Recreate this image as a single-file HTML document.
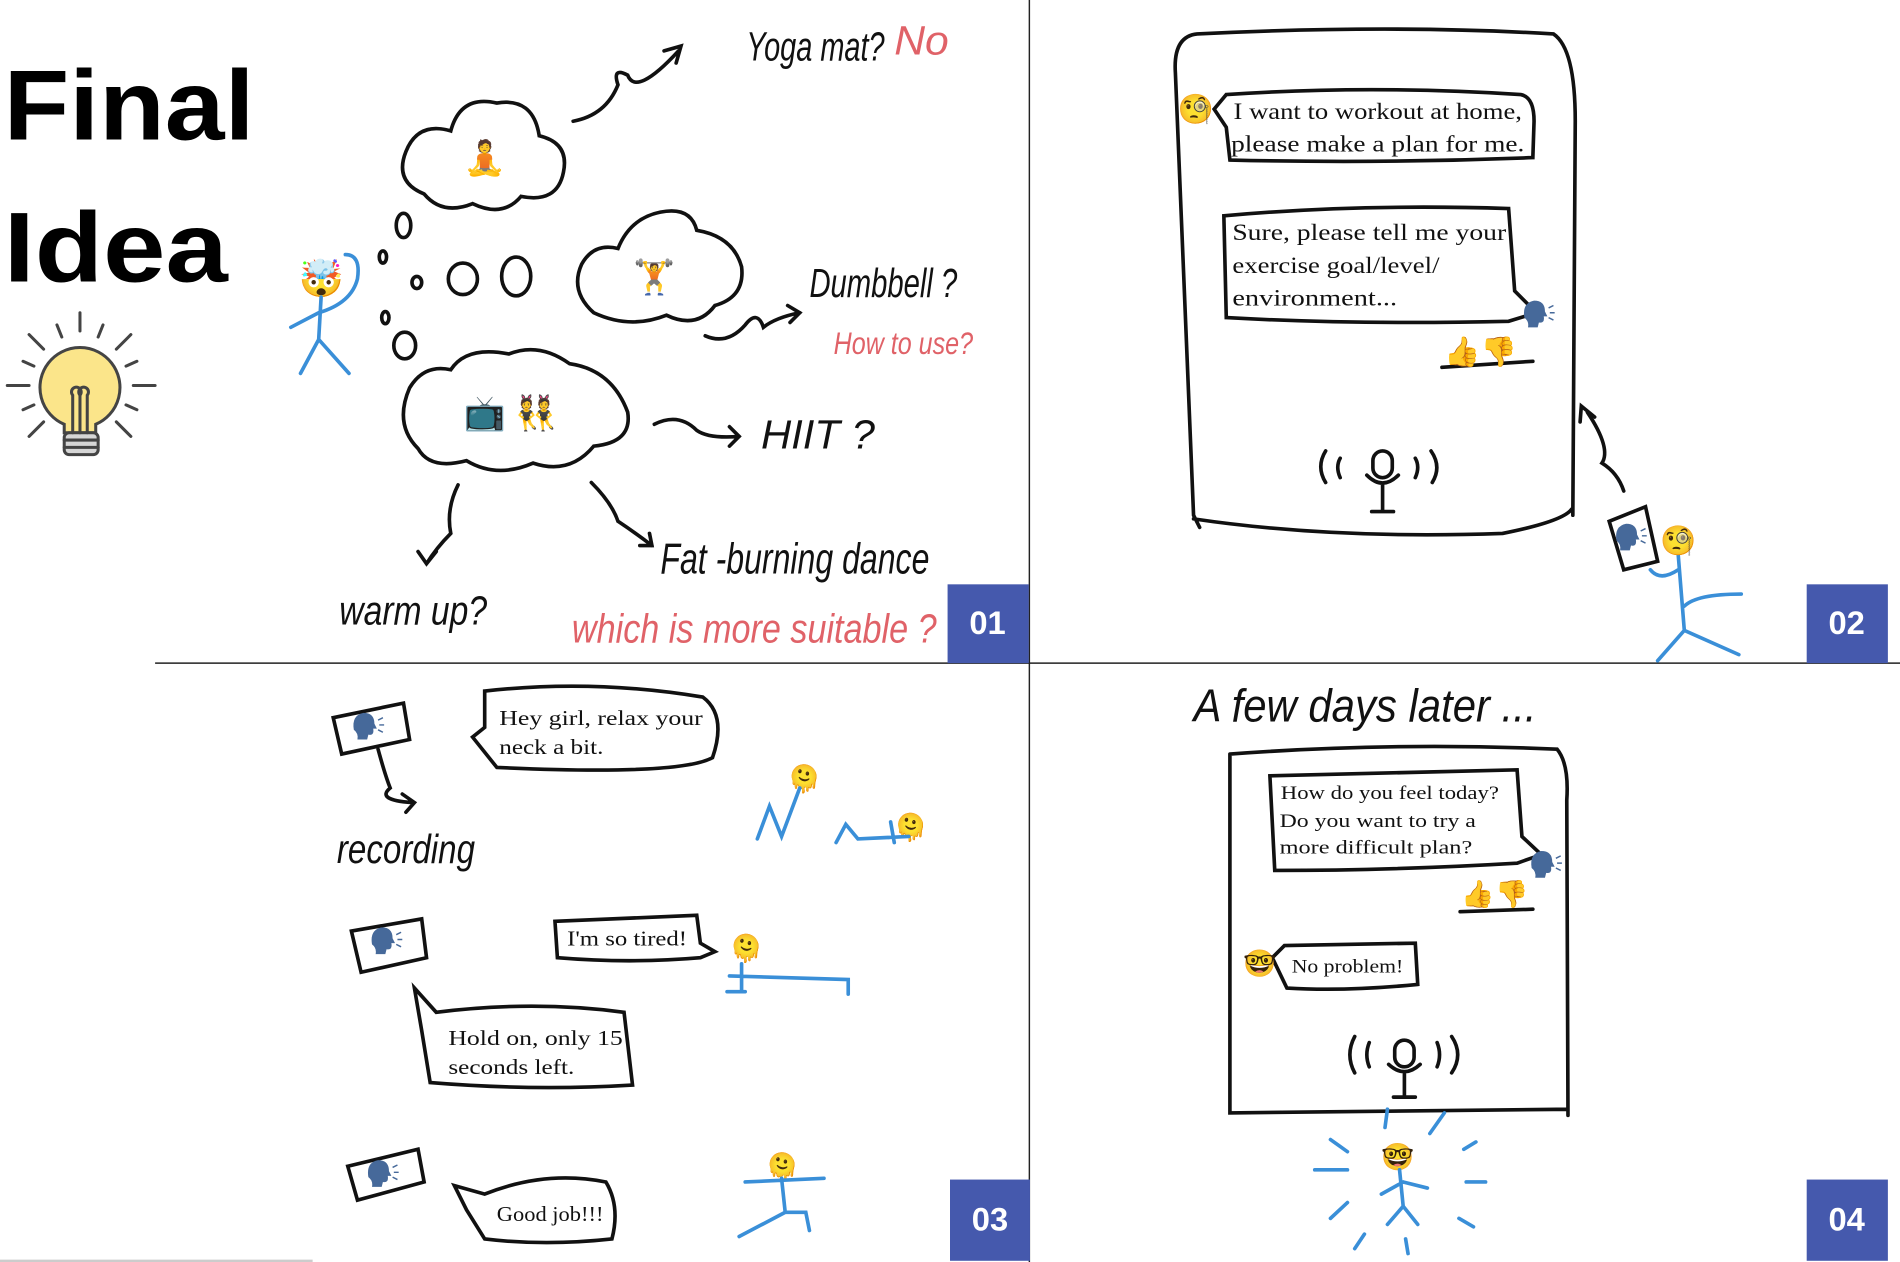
<!DOCTYPE html>
<html><head><meta charset="utf-8"><style>
html,body{margin:0;padding:0;background:#fff;width:1900px;height:1262px;overflow:hidden}
svg{display:block}
.h{font-family:"Liberation Sans",sans-serif;font-style:italic;fill:#111}
.r{fill:#e06268}
.c{font-family:"Liberation Serif",serif;fill:#111}
</style></head><body>
<svg width="1900" height="1262" viewBox="0 0 1568 1041" preserveAspectRatio="none" xmlns="http://www.w3.org/2000/svg">
<defs><g id="spk"><path d="M0 14 Q-2 2 8 0 Q17 0 17 9 L19 13 L16 13 Q17 19 12 18 L11 22 L3 22 Q4 17 0 14Z" fill="#46699a"/><path d="M20 6 L24 4 M21 10 L25 10 M20 14 L24 16" stroke="#46699a" stroke-width="1.2"/></g></defs>
<g font-family="Liberation Sans, sans-serif">
<text x="3" y="115" font-size="82" font-weight="bold" fill="#000" textLength="207" lengthAdjust="spacingAndGlyphs">Final</text>
<text x="3" y="232" font-size="82" font-weight="bold" fill="#000" textLength="185" lengthAdjust="spacingAndGlyphs">Idea</text>
</g>
<!-- bulb -->
<g stroke="#444" stroke-width="2.5" fill="none" stroke-linecap="round">
<line x1="66" y1="258" x2="66" y2="273"/><line x1="6" y1="318" x2="24" y2="318"/><line x1="110" y1="318" x2="128" y2="318"/>
<line x1="24" y1="276" x2="36" y2="288"/><line x1="108" y1="276" x2="96" y2="288"/>
<line x1="24" y1="360" x2="36" y2="348"/><line x1="108" y1="360" x2="96" y2="348"/>
<line x1="47" y1="268" x2="51" y2="278"/><line x1="85" y1="268" x2="81" y2="278"/>
<line x1="19" y1="298" x2="28" y2="302"/><line x1="113" y1="298" x2="104" y2="302"/>
<line x1="19" y1="338" x2="28" y2="334"/><line x1="113" y1="338" x2="104" y2="334"/>
<path d="M53 350 A33 33 0 1 1 79 350 L79 357 L53 357 Z" fill="#fbe58a"/>
<rect x="53" y="357" width="28" height="18" rx="4" fill="#d6d6d6"/>
<line x1="53" y1="363" x2="81" y2="363"/><line x1="53" y1="369" x2="81" y2="369"/>
<path d="M60 357 V326 A4 4 0 1 1 66 326 M66 326 A4 4 0 1 1 72 326 V357 M66 326 V357"/>
</g>
<line x1="128" y1="547" x2="1568" y2="547" stroke="#222" stroke-width="1.2"/>
<line x1="849.5" y1="0" x2="849.5" y2="1041" stroke="#222" stroke-width="1.2"/>
<line x1="0" y1="1040" x2="258" y2="1040" stroke="#ccc" stroke-width="2"/>
<g fill="#4559ad"><rect x="782" y="482" width="67" height="65"/><rect x="1491" y="482" width="67" height="65"/><rect x="784" y="973" width="66" height="67"/><rect x="1491" y="973" width="67" height="67"/></g>
<g fill="#fff" font-family="Liberation Sans, sans-serif" font-weight="bold" font-size="27" text-anchor="middle">
<text x="815" y="523">01</text><text x="1524" y="523">02</text><text x="817" y="1015">03</text><text x="1524" y="1015">04</text></g>

<!-- Panel 1 -->
<g stroke="#111" stroke-width="3" fill="none" stroke-linecap="round">
<path d="M350 160 Q325 150 335 125 Q345 100 372 108 Q380 78 410 85 Q440 80 445 112 Q470 118 465 142 Q460 168 430 162 Q415 180 390 168 Q365 178 350 160Z"/>
<path d="M490 258 Q470 240 480 218 Q490 200 510 205 Q520 180 545 175 Q570 170 575 190 Q605 195 612 220 Q615 245 590 252 Q575 272 550 260 Q520 272 490 258Z"/>
<path d="M345 370 Q325 350 338 320 Q350 300 372 305 Q385 285 420 292 Q445 282 470 300 Q505 305 518 340 Q522 365 490 368 Q470 392 440 382 Q410 395 385 380 Q355 388 345 370Z"/>
<ellipse cx="333" cy="186" rx="6" ry="10"/><ellipse cx="316" cy="212" rx="3" ry="5"/><ellipse cx="344" cy="233" rx="4" ry="5"/>
<ellipse cx="382" cy="230" rx="12" ry="13"/><ellipse cx="426" cy="228" rx="12" ry="16"/>
<ellipse cx="318" cy="262" rx="3" ry="5"/><ellipse cx="334" cy="285" rx="9" ry="11"/>
<path d="M473 100 Q500 95 510 70 Q505 55 518 62 Q525 80 560 42 M548 42 L562 38 L558 52"/>
<path d="M582 277 Q600 285 615 268 Q625 255 630 270 Q640 262 660 258 M650 252 L660 258 L652 266"/>
<path d="M540 350 Q560 340 575 355 Q585 362 610 360 M602 352 L610 360 L602 368"/>
<path d="M378 400 Q368 420 372 440 Q360 452 352 465 M345 455 L352 465 L360 455"/>
<path d="M488 398 Q505 415 510 430 Q525 440 538 450 M528 450 L538 450 L536 440"/>
</g>
<g font-size="28" text-anchor="middle"><text x="400" y="140">🧘</text><text x="540" y="238">🏋</text><text x="400" y="350">📺</text><text x="442" y="350">👯</text></g>
<text x="265" y="240" font-size="30" text-anchor="middle">🤯</text>
<g stroke="#3a8fd8" stroke-width="3" fill="none" stroke-linecap="round">
<path d="M265 245 L263 280 L248 308 M263 280 L288 308 M263 258 L240 270 M263 258 Q290 250 295 230 Q298 210 285 210"/>
</g>
<g lengthAdjust="spacingAndGlyphs">
<text x="616" y="50" class="h" font-size="34" textLength="114" lengthAdjust="spacingAndGlyphs">Yoga mat?</text><text x="738" y="45" class="h r" font-size="34" textLength="45" lengthAdjust="spacingAndGlyphs">No</text>
<text x="668" y="245" class="h" font-size="34" textLength="122" lengthAdjust="spacingAndGlyphs">Dumbbell ?</text>
<text x="688" y="292" class="h r" font-size="26" textLength="115" lengthAdjust="spacingAndGlyphs">How to use?</text>
<text x="628" y="370" class="h" font-size="34" textLength="94" lengthAdjust="spacingAndGlyphs">HIIT  ?</text>
<text x="545" y="473" class="h" font-size="36" textLength="222" lengthAdjust="spacingAndGlyphs">Fat -burning  dance</text>
<text x="280" y="515" class="h" font-size="34" textLength="122" lengthAdjust="spacingAndGlyphs">warm up?</text>
<text x="472" y="530" class="h r" font-size="34" textLength="301" lengthAdjust="spacingAndGlyphs">which is more  suitable ?</text>
</g>

<!-- Panel 2 -->
<g stroke="#111" stroke-width="3" fill="none" stroke-linecap="round">
<path d="M988 28 Q1150 20 1282 28 Q1300 40 1300 100 L1298 425 M988 28 Q968 30 970 60 L985 425 L990 435 M985 428 Q1100 445 1240 440 Q1290 430 1297 420"/>
<path d="M1012 78 Q1130 70 1255 78 Q1266 80 1266 100 L1265 130 Q1140 135 1015 132 L1012 105 L1002 90 Z"/>
<path d="M1010 178 Q1120 168 1245 172 L1250 240 L1268 258 L1245 265 Q1120 268 1012 262 Z"/>
<line x1="1190" y1="303" x2="1265" y2="298"/>
<path d="M1094 372 Q1086 385 1094 398 M1106 378 Q1102 385 1106 394 M1181 372 Q1190 385 1182 398 M1168 378 Q1172 385 1168 394"/>
<rect x="1133" y="372" width="16" height="22" rx="8"/><path d="M1128 392 Q1141 405 1154 392 M1141 400 V422 M1132 422 H1150"/>
<path d="M1328 430 L1358 418 L1368 463 L1340 470 Z"/>
<path d="M1340 405 Q1335 390 1322 382 Q1330 370 1310 340 M1304 348 L1305 335 L1316 344"/>
</g>
<g stroke="#3a8fd8" stroke-width="3" fill="none" stroke-linecap="round">
<path d="M1385 458 L1390 520 L1368 545 M1390 520 L1435 540 M1390 500 Q1400 490 1437 490 M1385 470 Q1370 480 1362 470"/>
</g>
<use href="#spk" x="1258" y="248"/><use href="#spk" x="1334" y="432"/>
<g font-size="24"><text x="972" y="98">🧐</text><text x="1192" y="298">👍</text><text x="1222" y="298">👎</text><text x="1370" y="454">🧐</text></g>
<g class="c" font-size="19"><text x="1018" y="98" textLength="238" lengthAdjust="spacingAndGlyphs">I want to workout at home,</text><text x="1016" y="125" textLength="242" lengthAdjust="spacingAndGlyphs">please make a plan for me.</text>
<text x="1017" y="198" textLength="226" lengthAdjust="spacingAndGlyphs">Sure, please tell me your</text><text x="1017" y="225" textLength="171" lengthAdjust="spacingAndGlyphs">exercise goal/level/</text><text x="1017" y="252" textLength="136" lengthAdjust="spacingAndGlyphs">environment...</text></g>

<!-- Panel 3 -->
<g stroke="#111" stroke-width="3" fill="none" stroke-linecap="round">
<path d="M275 592 L333 580 L338 610 L282 622 Z"/><path d="M312 618 Q318 640 322 650 Q310 660 340 662 M332 655 L342 662 L335 670"/>
<path d="M400 570 Q490 560 580 575 Q600 590 588 625 Q560 640 410 633 L390 608 L400 600 Z"/>
<path d="M290 768 L348 758 L352 790 L298 802 Z"/>
<path d="M458 760 L575 755 L578 778 L590 785 L578 790 Q520 795 460 790 Z"/>
<path d="M342 815 L360 835 Q440 825 515 835 L522 895 Q440 900 355 893 L348 850 Z"/>
<path d="M287 962 L345 948 L350 975 L295 990 Z"/>
<path d="M375 978 L400 985 Q450 965 500 975 Q512 995 505 1022 Q450 1028 400 1022 L385 998 Z"/>
</g>
<use href="#spk" x="292" y="588"/><use href="#spk" x="307" y="765"/><use href="#spk" x="304" y="957"/>
<g font-size="22"><text x="650" y="650">🫠</text><text x="738" y="690">🫠</text><text x="602" y="790">🫠</text><text x="632" y="970">🫠</text></g>
<g stroke="#3a8fd8" stroke-width="3" fill="none" stroke-linecap="round">
<path d="M625 692 L635 665 L645 690 L660 650 M690 695 L698 680 L708 692 L750 690 M735 678 L738 695"/>
<path d="M612 795 L612 818 M602 805 L700 808 L700 820 M600 818 L615 818"/>
<path d="M645 972 L648 1000 L610 1020 M648 1000 L665 1000 L668 1015 M615 975 L680 972"/>
</g>
<text x="278" y="712" class="h" font-size="34" textLength="114" lengthAdjust="spacingAndGlyphs">recording</text>
<g class="c" font-size="17"><text x="412" y="598" textLength="168" lengthAdjust="spacingAndGlyphs">Hey girl, relax your</text><text x="412" y="622" textLength="86" lengthAdjust="spacingAndGlyphs">neck a bit.</text>
<text x="468" y="780" textLength="99" lengthAdjust="spacingAndGlyphs">I'm so tired!</text><text x="370" y="862" textLength="144" lengthAdjust="spacingAndGlyphs">Hold on, only 15</text><text x="370" y="886" textLength="104" lengthAdjust="spacingAndGlyphs">seconds left.</text><text x="410" y="1007" textLength="88" lengthAdjust="spacingAndGlyphs">Good job!!!</text></g>

<!-- Panel 4 -->
<text x="985" y="595" class="h" font-size="38" textLength="283" lengthAdjust="spacingAndGlyphs">A few days later ...</text>
<g stroke="#111" stroke-width="3" fill="none" stroke-linecap="round">
<path d="M1015 622 Q1150 612 1285 618 Q1295 630 1293 660 L1294 920 M1015 622 L1015 918 L1294 915"/>
<path d="M1048 640 L1252 635 L1256 690 L1272 705 L1252 712 Q1150 718 1052 718 Z"/>
<line x1="1205" y1="752" x2="1265" y2="750"/>
<path d="M1050 790 L1060 780 L1168 778 L1170 812 Q1110 818 1062 815 Z"/>
<path d="M1118 855 Q1110 870 1118 885 M1130 860 Q1126 870 1130 880 M1198 855 Q1208 870 1198 885 M1186 860 Q1190 870 1186 880"/>
<rect x="1151" y="858" width="16" height="22" rx="8"/><path d="M1146 878 Q1159 890 1172 878 M1159 886 V905 M1150 905 H1168"/>
</g>
<use href="#spk" x="1264" y="702"/>
<g font-size="22"><text x="1206" y="745">👍</text><text x="1234" y="745">👎</text><text x="1026" y="802">🤓</text><text x="1140" y="962">🤓</text></g>
<g stroke="#3a8fd8" stroke-width="3" fill="none" stroke-linecap="round">
<path d="M1155 965 L1158 995 L1145 1010 M1158 995 L1170 1010 M1158 975 L1140 985 M1158 975 L1178 980"/>
<path d="M1145 915 L1143 930 M1192 918 L1180 935 M1098 940 L1112 950 M1208 948 L1218 942 M1085 965 L1112 965 M1210 975 L1226 975 M1098 1005 L1112 992 M1204 1005 L1216 1012 M1118 1030 L1126 1018 M1160 1022 L1162 1034"/>
</g>
<g class="c" font-size="16"><text x="1057" y="659" textLength="180" lengthAdjust="spacingAndGlyphs">How do you feel today?</text><text x="1056" y="682" textLength="162" lengthAdjust="spacingAndGlyphs">Do you want to try a</text><text x="1056" y="704" textLength="159" lengthAdjust="spacingAndGlyphs">more difficult plan?</text><text x="1066" y="802" textLength="92" lengthAdjust="spacingAndGlyphs">No problem!</text></g>
</svg>
</body></html>
